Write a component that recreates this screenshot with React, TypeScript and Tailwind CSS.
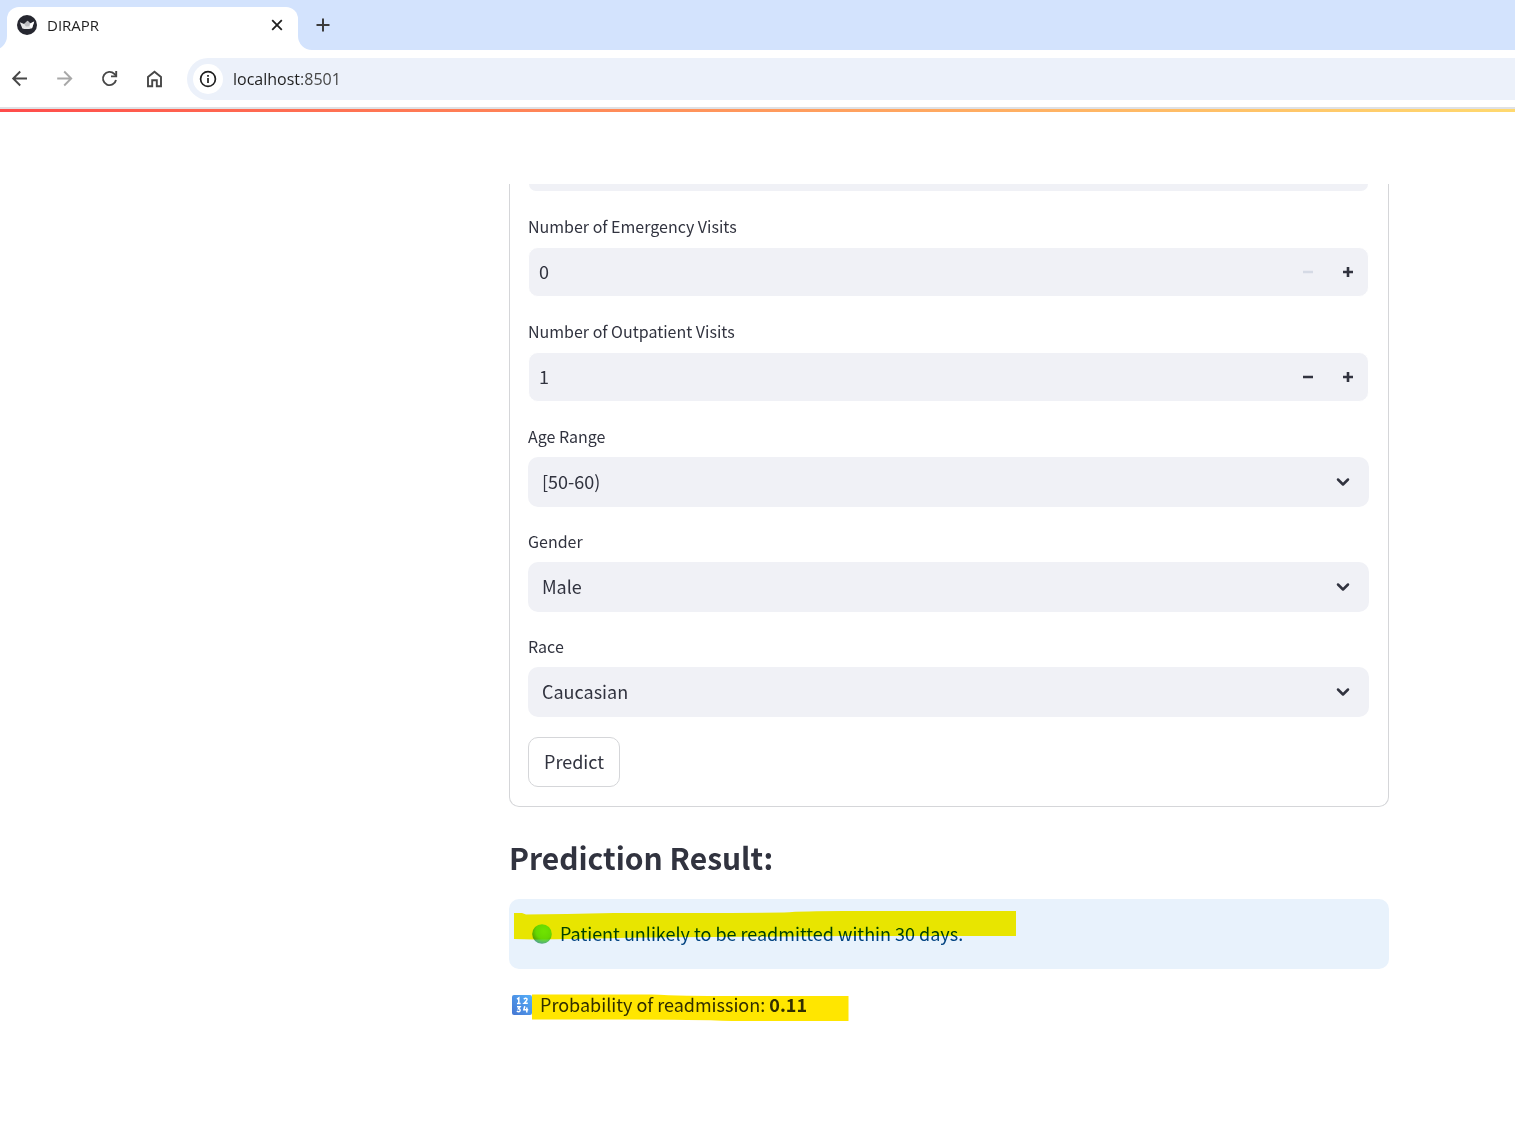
import { useState, type ReactNode } from "react";

function TabStrip() {
  return (
    <div className="flex h-[50px] items-end bg-[#d3e3fd] pl-[7px]">
      <div className="relative flex h-[43px] w-[291px] items-center rounded-t-[12px] bg-white pr-[12px] pb-[7px] pl-[10px]">
        <svg className="absolute bottom-0 -left-[14px] h-[14px] w-[14px]" viewBox="0 0 14 14" aria-hidden="true">
          <path d="M14 0A14 14 0 0 1 0 14H14Z" fill="#fff" />
        </svg>
        <svg className="absolute -right-[14px] bottom-0 h-[14px] w-[14px]" viewBox="0 0 14 14" aria-hidden="true">
          <path d="M0 0A14 14 0 0 0 14 14H0Z" fill="#fff" />
        </svg>
        <svg className="h-5 w-5" viewBox="0 0 20 20" aria-hidden="true">
          <circle cx="10" cy="10" r="10" fill="#262730" />
          <path d="M2.8 7.2 7.2 9 10.6 5.8 13.2 8.6 17.2 6.6 15 13.2Q10 14.8 5.4 13.6Z" fill="#e6e6e8" />
          <path d="M7.200 9 10.600 5.800 13.200 8.600 12.200 11.200 9 11.400Z" fill="#bdbdc1" />
          <path d="M17.200 6.600 13.200 8.600 12.800 12 15 13.200Z" fill="#fff" />
        </svg>
        <span className="ml-[10px] flex-1 text-[15px] leading-5 text-[#1f1f1f]">DIRAPR</span>
        <button type="button" aria-label="Close tab" className="flex h-5 w-[18px] items-center justify-center">
          <svg className="h-3 w-3" viewBox="0 0 12 12" stroke="#1f1f1f" strokeWidth="1.8" aria-hidden="true">
            <path d="M1.2 1.2 10.8 10.8M10.8 1.2 1.2 10.8" />
          </svg>
        </button>
      </div>
      <button type="button" aria-label="New tab" className="mb-[15px] ml-[15px] flex h-5 w-5 items-center justify-center">
        <svg className="h-[14px] w-[14px]" viewBox="0 0 14 14" stroke="#3c3c3c" strokeWidth="2" aria-hidden="true">
          <path d="M7 .5V13.5M.5 7H13.5" />
        </svg>
      </button>
    </div>
  );
}

function NavButton({ label, color, children }: { label: string; color: string; children: ReactNode }) {
  return (
    <button type="button" aria-label={label} className="flex h-5 w-5 items-center justify-center">
      <svg className="h-5 w-5" viewBox="0 0 20 20" fill="none" stroke={color} strokeWidth="1.9" aria-hidden="true">
        {children}
      </svg>
    </button>
  );
}

function Toolbar() {
  return (
    <div className="flex h-[57px] items-center bg-white pl-[10px]">
      <div className="flex items-center gap-[25px]">
        <NavButton label="Back" color="#474747">
          <path d="M17 9.500H3.500M10.200 2.500 3.200 9.500 10.200 16.500" />
        </NavButton>
        <NavButton label="Forward" color="#a8a8a8">
          <path d="M2.200 9.500H15.900M9.200 2.500 16.200 9.500 9.200 16.500" />
        </NavButton>
        <NavButton label="Reload" color="#474747">
          <path d="M16 11A6.600 6.600 0 1 1 14.300 4.900L16.200 6.800" />
          <path d="M16.200 2V7.400H11" />
        </NavButton>
        <NavButton label="Home" color="#474747">
          <path d="M3 17.200V8L9.500 2.700 16 8V17.200H11.800V11.200H7.200V17.200Z" />
        </NavButton>
      </div>
      <div className="ml-[22px] flex h-[42px] flex-1 items-center rounded-l-full bg-[#ecf1fa] pl-[6px]">
        <button type="button" aria-label="Site information" className="flex h-[30px] w-[30px] items-center justify-center rounded-full bg-white">
          <svg className="h-[18px] w-[18px]" viewBox="0 0 18 18" fill="none" stroke="#1f1f1f" strokeWidth="1.7" aria-hidden="true">
            <circle cx="9" cy="9" r="7.4" />
            <path d="M9 8V13M9 5V6.7" />
          </svg>
        </button>
        <span className="ml-[10px] text-[16px] leading-6 text-[#1f1f1f]">
          localhost<span className="text-[#474747]">:8501</span>
        </span>
      </div>
    </div>
  );
}

const labelClass = "block pb-[7px] text-[16px] leading-[28px]";

function StepIcon({ plus }: { plus?: boolean }) {
  return (
    <svg className="h-[10px] w-[10px]" viewBox="0 0 10 10" stroke="currentColor" strokeWidth="2.6" aria-hidden="true">
      <path d={plus ? "M0 5H10M5 0V10" : "M0 5H10"} />
    </svg>
  );
}

function NumberField({ id, label, initial }: { id: string; label: string; initial: number }) {
  const [value, setValue] = useState(initial);
  return (
    <div>
      <label htmlFor={id} className={labelClass}>{label}</label>
      <div className="flex h-[50px] overflow-hidden rounded-[10px] border border-white bg-[#f0f1f6]">
        <input
          id={id}
          inputMode="numeric"
          value={value}
          onChange={(e) => setValue(Number(e.target.value) || 0)}
          className="min-w-0 flex-1 bg-transparent pb-[2px] pl-[10px] text-[18px] outline-none"
        />
        <button
          type="button"
          aria-label={`Decrease ${label}`}
          disabled={value === 0}
          onClick={() => setValue(value - 1)}
          className="flex w-10 items-center justify-center disabled:text-[#d5dae5]"
        >
          <StepIcon />
        </button>
        <button
          type="button"
          aria-label={`Increase ${label}`}
          onClick={() => setValue(value + 1)}
          className="flex w-10 items-center justify-center"
        >
          <StepIcon plus />
        </button>
      </div>
    </div>
  );
}

function SelectField({ id, label, value }: { id: string; label: string; value: string }) {
  return (
    <div>
      <label htmlFor={id} className={labelClass}>{label}</label>
      <div className="relative">
        <select
          id={id}
          defaultValue={value}
          className="block h-[50px] w-full appearance-none rounded-[10px] bg-[#f0f1f6] pr-12 pb-[2px] pl-[14px] text-[18px] outline-none"
        >
          <option>{value}</option>
        </select>
        <svg
          className="pointer-events-none absolute top-[20px] right-[19px] h-[10px] w-[14px]"
          viewBox="0 0 14 10"
          fill="none"
          stroke="currentColor"
          strokeWidth="2.5"
          strokeLinecap="round"
          strokeLinejoin="round"
          aria-hidden="true"
        >
          <path d="M2 2.5 7 7.5 12 2.5" />
        </svg>
      </div>
    </div>
  );
}

function GreenCircle() {
  return (
    <svg className="h-5 w-5" viewBox="0 0 20 20" aria-hidden="true">
      <defs>
        <radialGradient id="ball" cx="0.6" cy="0.35" r="0.68">
          <stop offset="0" stopColor="#70f018" />
          <stop offset="0.6" stopColor="#66e32c" />
          <stop offset="1" stopColor="#52a386" />
        </radialGradient>
      </defs>
      <circle cx="10" cy="10" r="9.8" fill="url(#ball)" />
    </svg>
  );
}

function NumbersTile() {
  return (
    <svg className="h-5 w-5" viewBox="0 0 20 20" aria-hidden="true">
      <defs>
        <linearGradient id="tile" x1="1" y1="0" x2="0" y2="1">
          <stop offset="0" stopColor="#55b0fa" />
          <stop offset="1" stopColor="#4576d2" />
        </linearGradient>
      </defs>
      <rect width="20" height="20" rx="2" fill="url(#tile)" />
      <g fill="none" stroke="#fff" strokeWidth="1.5">
        <path d="M5 4.2 6.8 3V8.6M5 8.4H8.6" />
        <path d="M11.8 4.3Q13.4 2.4 14.9 3.7 15.7 5 12.2 8.2H15.8" />
        <path d="M5 11.8H8L6.5 13.8Q8.6 14 8 15.8 7 17.4 4.8 16.2" />
        <path d="M12.8 11.2 11.8 14.8H16.2M14.8 12.6V17.4" />
      </g>
    </svg>
  );
}

export default function App() {
  return (
    <div className="min-h-screen bg-white font-['Open_Sans',sans-serif]">
      <header>
        <TabStrip />
        <Toolbar />
        <div className="h-[2px] bg-[#dfe1e5]" />
        <div className="h-[3px] bg-linear-to-r from-[#ff4b4b] to-[#ffd96f]" />
      </header>

      <main className="mr-[126px] ml-auto max-w-[880px] pt-[72px] font-['Noto_Sans_CJK_SC',sans-serif] text-[#31333f]">
        <form
          onSubmit={(e) => e.preventDefault()}
          className="flex flex-col gap-5 rounded-b-[10px] border border-t-0 border-[#d5d6d9] pr-[19px] pb-[19px] pl-[18px]"
        >
          <div className="mx-px mb-px h-[7px] rounded-b-[9px] bg-[#f0f1f6]" />
          <NumberField id="emergency" label="Number of Emergency Visits" initial={0} />
          <NumberField id="outpatient" label="Number of Outpatient Visits" initial={1} />
          <SelectField id="age" label="Age Range" value="[50-60)" />
          <SelectField id="gender" label="Gender" value="Male" />
          <SelectField id="race" label="Race" value="Caucasian" />
          <button type="submit" className="h-[50px] self-start rounded-[10px] border border-[#d5d6d9] px-[15px] pb-[2px] text-[18px]">
            Predict
          </button>
        </form>

        <h2 className="mt-[29px] text-[30px] leading-[42px] font-bold">Prediction Result:</h2>

        <div className="relative mt-[21px] flex h-[70px] items-center gap-2 rounded-[10px] bg-[#e8f2fc] pl-[23px] text-[#004280]">
          <GreenCircle />
          <p className="pb-[2px] text-[18px] leading-8">Patient unlikely to be readmitted within 30 days.</p>
          <svg
            className="pointer-events-none absolute top-[12px] left-[5px] h-[30px] w-[502px] mix-blend-multiply"
            viewBox="0 0 502 30"
            aria-hidden="true"
          >
            <path d="M0 2H8L12 3.5Q50 3 100 2Q200 2 270 1.5Q290 0 330 0H502V25H330Q200 26 130 26.5Q60 28 20 28.5L0 28Z" fill="#fff200" />
          </svg>
        </div>

        <div className="relative mt-5 flex items-center gap-2 pl-[3px]">
          <NumbersTile />
          <p className="pb-[2px] text-[18px] leading-[30px]">
            Probability of readmission: <strong>0.11</strong>
          </p>
          <svg
            className="pointer-events-none absolute top-[5px] left-[23px] h-[28px] w-[317px] mix-blend-multiply"
            viewBox="0 0 317 28"
            aria-hidden="true"
          >
            <path d="M0 0.5H120Q150 2 200 2H316.500V27H200Q160 25.500 100 25.500H0Z" fill="#ffe600" />
          </svg>
        </div>
      </main>
    </div>
  );
}
